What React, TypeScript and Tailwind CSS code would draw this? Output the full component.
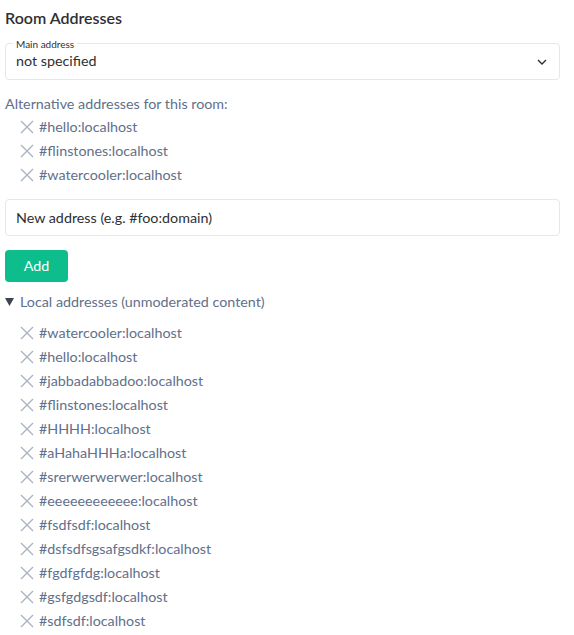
import React from "react";

const alt = ["#hello:localhost", "#flinstones:localhost", "#watercooler:localhost"];
const local = [
  "#watercooler:localhost",
  "#hello:localhost",
  "#jabbadabbadoo:localhost",
  "#flinstones:localhost",
  "#HHHH:localhost",
  "#aHahaHHHa:localhost",
  "#srerwerwerwer:localhost",
  "#eeeeeeeeeeee:localhost",
  "#fsdfsdf:localhost",
  "#dsfsdfsgsafgsdkf:localhost",
  "#fgdfgfdg:localhost",
  "#gsfgdgsdf:localhost",
  "#sdfsdf:localhost",
];

function XIcon() {
  return (
    <svg width="14" height="14" viewBox="0 0 14 14" className="shrink-0">
      <path d="M1 1L13 13M13 1L1 13" stroke="#a9b2bf" strokeWidth="1.3" fill="none" />
    </svg>
  );
}

function Item({ text }: { text: string }) {
  return (
    <div className="flex items-center h-[24px] pl-[15px] gap-[5px]">
      <XIcon />
      <span className="text-[#61708b] text-[14.3px]">{text}</span>
    </div>
  );
}

export default function App() {
  return (
    <div
      className="bg-white w-[574px] h-[635px] overflow-hidden pl-[5px] pr-[14px]"
      style={{ fontFamily: "Lato, 'Noto Sans', sans-serif" }}
    >
      <div className="h-[36px] flex items-center text-[16px] font-semibold text-[#2e2f32]">Room Addresses</div>
      <div className="relative mt-[7px] h-[37px] border border-[#e7e7e7] rounded-[4px] flex items-center pl-[10px] pr-[12px]">
        <span className="absolute -top-[5px] left-[7px] bg-white px-[3px] text-[10px] leading-[10px] text-[#2e2f32]">Main address</span>
        <span className="flex-1 text-[14.3px] text-[#2e2f32] -mt-[1px]">not specified</span>
        <svg width="10" height="6" viewBox="0 0 10 6">
          <path d="M1 1L5 5L9 1" stroke="#2e2f32" strokeWidth="1.4" fill="none" />
        </svg>
      </div>
      <div className="mt-[15px] text-[14.3px] text-[#61708b] h-[18px] leading-[18px]">Alternative addresses for this room:</div>
      <div className="mt-[2px]">
        {alt.map((a) => (
          <Item key={a} text={a} />
        ))}
      </div>
      <div className="mt-[12px] h-[37px] border border-[#e7e7e7] rounded-[4px] flex items-center pl-[10px]">
        <span className="text-[14.3px] text-[#2e2f32]">New address (e.g. #foo:domain)</span>
      </div>
      <button className="mt-[14px] w-[63px] h-[32px] rounded-[4px] bg-[#0dbd8b] text-white text-[14.3px] flex items-center justify-center">
        Add
      </button>
      <div className="mt-[11px] h-[18px] flex items-center text-[14.3px] text-[#61708b]">
        <svg width="9" height="8" viewBox="0 0 9 8" className="mr-[6px]">
          <path d="M0 0H9L4.5 8Z" fill="#3f4450" />
        </svg>
        Local addresses (unmoderated content)
      </div>
      <div className="mt-[10px]">
        {local.map((a) => (
          <Item key={a} text={a} />
        ))}
      </div>
    </div>
  );
}
